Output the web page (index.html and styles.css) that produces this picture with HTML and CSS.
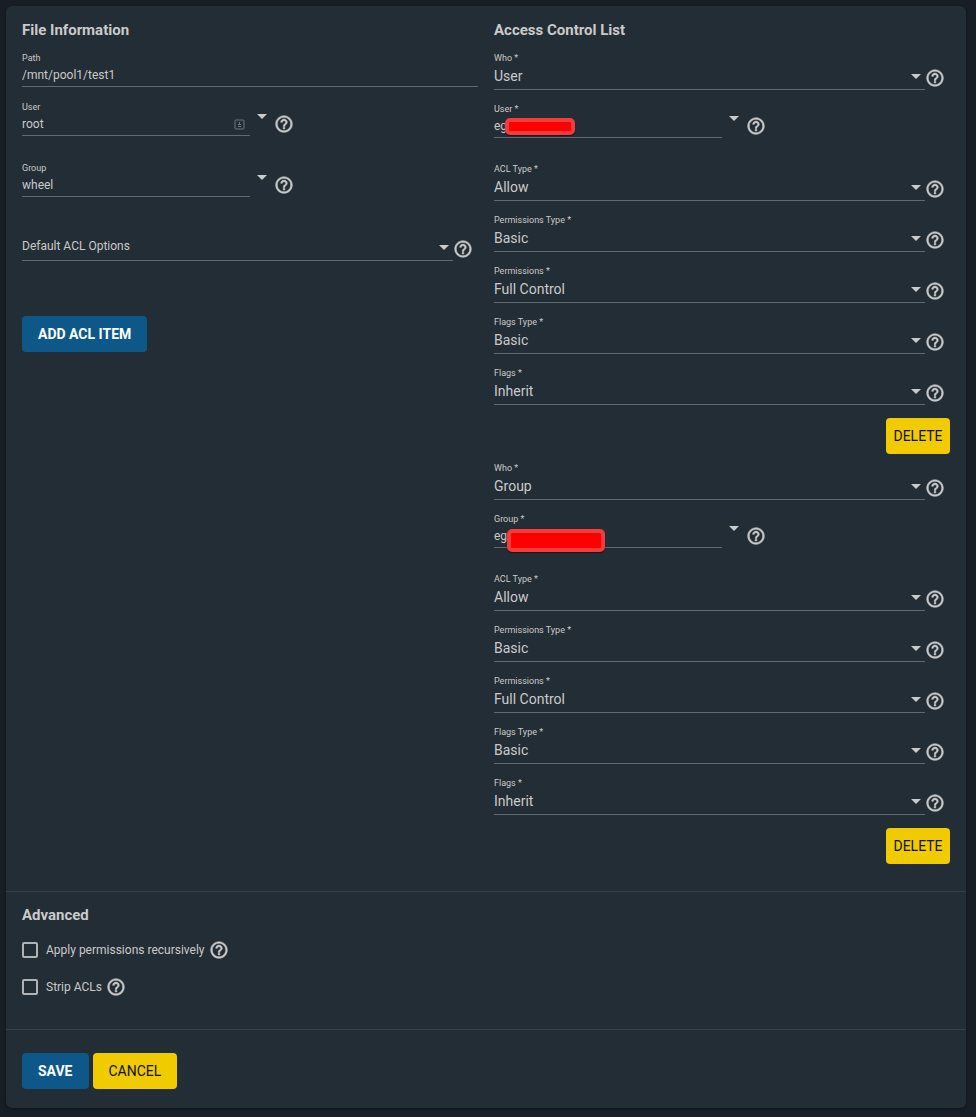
FILE: index.html
```
<!DOCTYPE html>
<html lang="en">
<head>
<meta charset="utf-8">
<title>Edit ACL</title>
<link rel="stylesheet" href="styles.css">
</head>
<body>
<svg class="defs" aria-hidden="true">
  <symbol id="help" viewBox="0 0 24 24"><path d="M11 18h2v-2h-2v2zm1-16C6.48 2 2 6.48 2 12s4.480 10 10 10 10-4.480 10-10S17.520 2 12 2zm0 18c-4.410 0-8-3.590-8-8s3.590-8 8-8 8 3.590 8 8-3.590 8-8 8zm0-14c-2.210 0-4 1.790-4 4h2c0-1.100.9-2 2-2s2 .9 2 2c0 2-3 1.750-3 5h2c0-2.250 3-2.500 3-5 0-2.210-1.790-4-4-4z"/></symbol>
</svg>
<form class="card">
  <div class="columns">
    <section class="column column-info">
      <h2 class="heading">File Information</h2>
      <div class="field">
        <div class="control">
          <label class="label" for="path">Path</label>
          <input class="input" id="path" value="/mnt/pool1/test1">
        </div>
      </div>
      <div class="field combo">
        <div class="control">
          <label class="label" for="user">User</label>
          <input class="input" id="user" value="root">
          <svg class="autofill" viewBox="0 0 11 11" aria-hidden="true"><rect x="1" y="1" width="9" height="9" rx="1"/><path d="M5.500 3v2M4 5.500h3M4 7.500h3"/></svg>
        </div>
        <button class="toggle" type="button" aria-label="Show users"><span class="arrow"></span></button>
        <svg class="help"><use href="#help"/></svg>
      </div>
      <div class="field combo">
        <div class="control">
          <label class="label" for="group">Group</label>
          <input class="input" id="group" value="wheel">
        </div>
        <button class="toggle" type="button" aria-label="Show groups"><span class="arrow"></span></button>
        <svg class="help"><use href="#help"/></svg>
      </div>
      <div class="field">
        <div class="control">
          <span class="label"></span>
          <select class="select placeholder" aria-label="Default ACL Options"><option>Default ACL Options</option></select>
          <span class="arrow select-arrow"></span>
        </div>
        <svg class="help"><use href="#help"/></svg>
      </div>
      <button class="button primary add" type="button">ADD ACL ITEM</button>
    </section>

    <section class="column">
      <h2 class="heading">Access Control List</h2>
      <div class="entry">
        <div class="field">
          <div class="control"><label class="label" for="who1">Who *</label><select class="select" id="who1"><option>User</option></select><span class="arrow select-arrow"></span></div>
          <svg class="help"><use href="#help"/></svg>
        </div>
        <div class="field combo">
          <div class="control"><label class="label" for="name1">User *</label><input class="input" id="name1" value="eg"><span class="redaction"></span></div>
          <button class="toggle" type="button" aria-label="Show users"><span class="arrow"></span></button>
          <svg class="help"><use href="#help"/></svg>
        </div>
        <div class="field">
          <div class="control"><label class="label" for="type1">ACL Type *</label><select class="select" id="type1"><option>Allow</option></select><span class="arrow select-arrow"></span></div>
          <svg class="help"><use href="#help"/></svg>
        </div>
        <div class="field">
          <div class="control"><label class="label" for="ptype1">Permissions Type *</label><select class="select" id="ptype1"><option>Basic</option></select><span class="arrow select-arrow"></span></div>
          <svg class="help"><use href="#help"/></svg>
        </div>
        <div class="field">
          <div class="control"><label class="label" for="perm1">Permissions *</label><select class="select" id="perm1"><option>Full Control</option></select><span class="arrow select-arrow"></span></div>
          <svg class="help"><use href="#help"/></svg>
        </div>
        <div class="field">
          <div class="control"><label class="label" for="ftype1">Flags Type *</label><select class="select" id="ftype1"><option>Basic</option></select><span class="arrow select-arrow"></span></div>
          <svg class="help"><use href="#help"/></svg>
        </div>
        <div class="field">
          <div class="control"><label class="label" for="flags1">Flags *</label><select class="select" id="flags1"><option>Inherit</option></select><span class="arrow select-arrow"></span></div>
          <svg class="help"><use href="#help"/></svg>
        </div>
        <button class="button accent delete" type="button">DELETE</button>
      </div>
      <div class="entry">
        <div class="field">
          <div class="control"><label class="label" for="who2">Who *</label><select class="select" id="who2"><option>Group</option></select><span class="arrow select-arrow"></span></div>
          <svg class="help"><use href="#help"/></svg>
        </div>
        <div class="field combo">
          <div class="control"><label class="label" for="name2">Group *</label><input class="input" id="name2" value="eg"><span class="redaction redaction-large"></span></div>
          <button class="toggle" type="button" aria-label="Show groups"><span class="arrow"></span></button>
          <svg class="help"><use href="#help"/></svg>
        </div>
        <div class="field">
          <div class="control"><label class="label" for="type2">ACL Type *</label><select class="select" id="type2"><option>Allow</option></select><span class="arrow select-arrow"></span></div>
          <svg class="help"><use href="#help"/></svg>
        </div>
        <div class="field">
          <div class="control"><label class="label" for="ptype2">Permissions Type *</label><select class="select" id="ptype2"><option>Basic</option></select><span class="arrow select-arrow"></span></div>
          <svg class="help"><use href="#help"/></svg>
        </div>
        <div class="field">
          <div class="control"><label class="label" for="perm2">Permissions *</label><select class="select" id="perm2"><option>Full Control</option></select><span class="arrow select-arrow"></span></div>
          <svg class="help"><use href="#help"/></svg>
        </div>
        <div class="field">
          <div class="control"><label class="label" for="ftype2">Flags Type *</label><select class="select" id="ftype2"><option>Basic</option></select><span class="arrow select-arrow"></span></div>
          <svg class="help"><use href="#help"/></svg>
        </div>
        <div class="field">
          <div class="control"><label class="label" for="flags2">Flags *</label><select class="select" id="flags2"><option>Inherit</option></select><span class="arrow select-arrow"></span></div>
          <svg class="help"><use href="#help"/></svg>
        </div>
        <button class="button accent delete" type="button">DELETE</button>
      </div>
    </section>
  </div>

  <section class="advanced">
    <h2 class="heading">Advanced</h2>
    <div class="check-row">
      <input class="checkbox" type="checkbox" id="recursive"><label class="check-label" for="recursive">Apply permissions recursively</label>
      <svg class="help check-help"><use href="#help"/></svg>
    </div>
    <div class="check-row">
      <input class="checkbox" type="checkbox" id="strip"><label class="check-label" for="strip">Strip ACLs</label>
      <svg class="help check-help"><use href="#help"/></svg>
    </div>
  </section>

  <div class="actions">
    <button class="button primary" type="submit">SAVE</button>
    <button class="button accent" type="button">CANCEL</button>
  </div>
</form>
</body>
</html>
```
FILE: styles.css
```
* {
  box-sizing: border-box;
}

body {
  margin: 0;
  padding: 6px 10px 9px 6px;
  background: #181e26;
  color: #cacaca;
  font-family: Roboto, "Liberation Sans", sans-serif;
}

.defs {
  position: absolute;
  width: 0;
  height: 0;
}

.card {
  background: #232d35;
  border-radius: 6px;
  box-shadow: 0 1px 3px rgba(0, 0, 0, 0.4);
}

.columns {
  display: grid;
  grid-template-columns: 1fr 1fr;
  gap: 16px;
  padding: 16px 16px 27px;
}

.column {
  display: flex;
  flex-direction: column;
  gap: 9px;
}

.column-info {
  gap: 15px;
}

.heading {
  margin: 0;
  font-size: 15px;
  line-height: 16px;
  font-weight: 700;
}

.column > .heading {
  margin-bottom: 6px;
}

.column-info > .heading {
  margin-bottom: 0;
}

.entry {
  display: flex;
  flex-direction: column;
  gap: 14px;
}

.field {
  display: flex;
  align-items: flex-end;
}

.combo {
  margin-bottom: 12px;
}

.control {
  position: relative;
  flex: 1;
  min-width: 0;
  border-bottom: 1px solid #626a70;
}

.combo .control {
  flex: 0 0 50%;
}

.label {
  display: block;
  height: 10px;
  font-size: 9px;
  line-height: 10px;
}

.input,
.select {
  display: block;
  width: 100%;
  margin: 0;
  border: 0;
  padding: 0 0 1px;
  background: transparent;
  color: inherit;
  font-family: inherit;
  outline: 0;
}

.input {
  height: 23px;
  padding: 1px 0 0;
  font-size: 12px;
}

.select {
  height: 26px;
  appearance: none;
  font-size: 14px;
}

.placeholder {
  padding-bottom: 2px;
  font-size: 12px;
}

.arrow {
  display: block;
  border: solid transparent;
  border-width: 5px 5px 0;
  border-top-color: #cacaca;
}

.select-arrow {
  position: absolute;
  top: 21px;
  right: 4px;
  pointer-events: none;
}

.toggle {
  display: flex;
  align-self: flex-start;
  justify-content: center;
  width: 24px;
  margin: 0;
  border: 0;
  padding: 12px 0 6px;
  background: transparent;
}

.help {
  flex: none;
  width: 20px;
  height: 20px;
  margin: 0 5px 2px 0;
  fill: #cacaca;
  stroke: #cacaca;
  stroke-width: 0.6;
}

.autofill {
  position: absolute;
  top: 17px;
  right: 5px;
  width: 11px;
  height: 11px;
  fill: none;
  stroke: #70777c;
}

.redaction {
  position: absolute;
  top: 14px;
  left: 11px;
  width: 70px;
  height: 17px;
  border: 4px solid #f43c3c;
  border-radius: 5px;
  background: #ff0000;
  box-shadow: 0 1px 1px rgba(0, 0, 0, 0.5);
}

.redaction-large {
  top: 15px;
  left: 13px;
  width: 98px;
  height: 23px;
}

.button {
  height: 36px;
  margin: 0;
  border: 0;
  border-radius: 4px;
  padding: 0 16px 1px;
  font-family: inherit;
  font-size: 14px;
}

.primary {
  background: #0d5789;
  color: #ffffff;
  font-weight: 700;
}

.accent {
  background: #f0cb00;
  color: #111111;
}

.add {
  align-self: flex-start;
  margin-top: 40px;
}

.delete {
  align-self: flex-end;
  min-width: 64px;
  margin-top: -1px;
  padding: 0 7px 1px;
}

.advanced {
  display: flex;
  flex-direction: column;
  gap: 17px;
  border-top: 1px solid #364048;
  padding: 15px 16px 32px;
}

.check-row {
  display: flex;
  align-items: center;
}

.checkbox {
  appearance: none;
  width: 16px;
  height: 16px;
  margin: 0 8px 0 0;
  border: 2px solid #b0b2b3;
  border-radius: 2px;
}

.check-label {
  font-size: 12px;
  line-height: 20px;
}

.check-help {
  margin: 0 0 0 4px;
}

.actions {
  display: flex;
  gap: 4px;
  border-top: 1px solid #364048;
  padding: 23px 16px 19px;
}
```
